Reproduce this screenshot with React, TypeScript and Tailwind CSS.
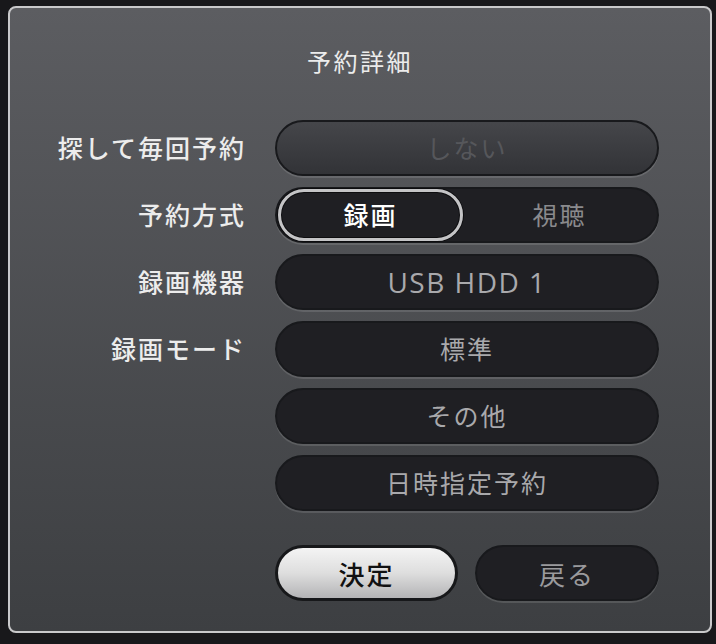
import React from 'react';

const FONT = '"Noto Sans CJK JP", "Noto Sans", sans-serif';
const LATIN = '"Open Sans", "Noto Sans CJK JP", sans-serif';

const rows = [
  { label: '探して毎回予約', kind: 'disabled', value: 'しない' },
  { label: '予約方式', kind: 'segment' },
  { label: '録画機器', kind: 'latin', value: 'USB HDD 1' },
  { label: '録画モード', kind: 'plain', value: '標準' },
  { label: '', kind: 'plain', value: 'その他' },
  { label: '', kind: 'plain', value: '日時指定予約' },
];

const pill =
  'h-[56px] rounded-full border-2 border-[#18191c] shadow-[0_2px_0_rgba(255,255,255,0.12)]';

const App: React.FC = () => {
  return (
    <div className="w-[716px] h-[644px] bg-[#18181b] pt-[6px] pl-[8px]" style={{ fontFamily: FONT }}>
      <div className="w-[704px] h-[627px] rounded-[8px] border-2 border-[#c9c9cb] bg-gradient-to-b from-[#5c5d61] to-[#3d3f42] flex flex-col">
        {/* タイトル */}
        <div className="mt-[38px] h-[30px] leading-[30px] text-center text-[24px] tracking-[2.5px] text-[#ececec]">
          予約詳細
        </div>

        <div className="mt-[44px] flex flex-col gap-[11px]">
          {rows.map((r, i) => (
            <div key={i} className="flex items-center">
              <div className="w-[236px] text-right text-[25px] tracking-[2px] font-medium text-[#ececec]">
                {r.label}
              </div>
              <div className="ml-[29px] w-[384px]">
                {r.kind === 'disabled' && (
                  <div
                    className={`${pill} bg-gradient-to-b from-[#45464a] to-[#323337] flex items-center justify-center text-[25px] tracking-[2px] text-[#56575b]`}
                  >
                    {r.value}
                  </div>
                )}
                {r.kind === 'segment' && (
                  <div className={`${pill} bg-[#1f1f23] flex items-center p-[1px]`}>
                    <div className="w-[185px] h-[52px] rounded-full border-[3px] border-[#c4c4c6] shadow-[inset_0_0_0_1px_#0d0d0f,0_0_0_1px_#0d0d0f] flex items-center justify-center text-[25px] tracking-[2px] font-medium text-white">
                      録画
                    </div>
                    <div className="flex-1 text-center text-[25px] tracking-[2px] text-[#8a8a8d]">視聴</div>
                  </div>
                )}
                {r.kind === 'latin' && (
                  <div
                    className={`${pill} bg-[#1f1f23] flex items-center justify-center text-[28px] tracking-[1.5px] text-[#a9a9ac]`}
                    style={{ fontFamily: LATIN }}
                  >
                    {r.value}
                  </div>
                )}
                {r.kind === 'plain' && (
                  <div
                    className={`${pill} bg-[#1f1f23] flex items-center justify-center text-[25px] tracking-[2px] text-[#a9a9ac]`}
                  >
                    {r.value}
                  </div>
                )}
              </div>
            </div>
          ))}
        </div>

        {/* ボタン */}
        <div className="mt-[34px] ml-[265px] flex gap-[17px]">
          <div className="w-[183px] h-[56px] rounded-full border-[3px] border-[#17181a] bg-gradient-to-b from-[#f4f4f4] via-[#dedede] to-[#b4b4b6] flex items-center justify-center text-[26px] tracking-[2px] font-medium text-[#111]">
            決定
          </div>
          <div className="w-[184px] h-[56px] rounded-full border-2 border-[#18191c] bg-[#1f1f23] shadow-[0_2px_0_rgba(255,255,255,0.12)] flex items-center justify-center text-[26px] tracking-[2px] text-[#9a9a9d]">
            戻る
          </div>
        </div>
      </div>
    </div>
  );
};

export default App;
